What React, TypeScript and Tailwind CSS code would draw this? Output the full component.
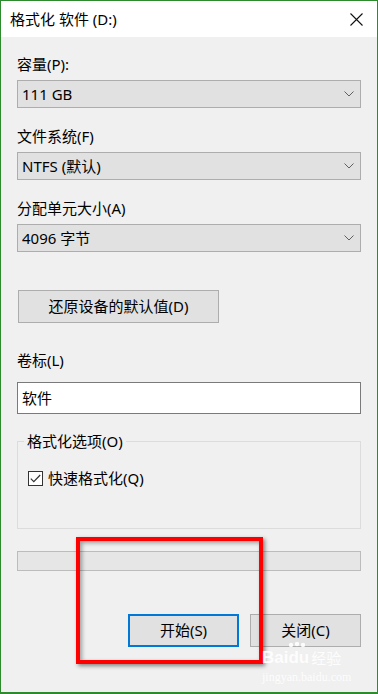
import React from "react";

const font = "font-['Noto_Sans','Noto_Sans_CJK_SC',sans-serif]";

function Chevron() {
  return (
    <svg width="10" height="6" viewBox="0 0 10 6" className="shrink-0">
      <path d="M0.5 0.5 L5 5 L9.5 0.5" fill="none" stroke="#606060" strokeWidth="1" />
    </svg>
  );
}

function Select({ value }: { value: string }) {
  return (
    <div className="flex h-[28px] items-center justify-between border border-[#adadad] bg-[#e1e1e1] pl-[4px] pr-[6px] text-[15px] leading-none text-black">
      <span>{value}</span>
      <Chevron />
    </div>
  );
}

function Label({ children, className = "" }: { children: React.ReactNode; className?: string }) {
  return <div className={`h-[20px] text-[15px] leading-[20px] text-black ${className}`}>{children}</div>;
}

function Watermark() {
  return (
    <div className="pointer-events-none absolute left-[261px] top-[649px] flex flex-col text-white opacity-90">
      <div className="flex items-end">
        <span className="font-['Liberation_Sans',sans-serif] text-[17px] font-bold leading-[16px]">Bai</span>
        <span className="relative font-['Liberation_Sans',sans-serif] text-[17px] font-bold leading-[16px]">
          <svg width="20" height="9" viewBox="0 0 20 9" className="absolute -top-[8px] left-[-1px]">
            <circle cx="4" cy="3" r="2.2" fill="white" />
            <circle cx="10" cy="2" r="2.2" fill="white" />
            <circle cx="16" cy="3" r="2.2" fill="white" />
          </svg>
          du
        </span>
        <span className="ml-[2px] font-['Noto_Sans_CJK_SC',sans-serif] text-[15px] leading-[16px]">经验</span>
      </div>
      <span className="mt-[5px] font-['Liberation_Serif',serif] text-[12px] leading-[12px]">jingyan.baidu.com</span>
    </div>
  );
}

export default function App() {
  return (
    <div className={`relative flex h-[694px] w-[378px] flex-col border border-b-2 border-[#2d8a2d] bg-[#f0f0f0] ${font}`}>
      <div className="flex h-[36px] items-center justify-between bg-white pl-[9px] pr-[14px]">
        <span className="text-[15px] leading-none text-black">格式化 软件 (D:)</span>
        <svg width="13" height="13" viewBox="0 0 13 13">
          <path d="M0.5 0.5 L12.5 12.5 M12.5 0.5 L0.5 12.5" stroke="#111" strokeWidth="1.1" />
        </svg>
      </div>

      <div className="flex flex-col px-[16px]">
        <Label className="mt-[17px]">容量(P):</Label>
        <div className="mt-[6px]">
          <Select value="111 GB" />
        </div>

        <Label className="mt-[18px]">文件系统(F)</Label>
        <div className="mt-[6px]">
          <Select value="NTFS (默认)" />
        </div>

        <Label className="mt-[18px]">分配单元大小(A)</Label>
        <div className="mt-[6px]">
          <Select value="4096 字节" />
        </div>

        <div className="ml-[1px] mt-[38px] flex h-[33px] w-[201px] items-center justify-center border border-[#adadad] bg-[#e1e1e1] text-[15px] leading-none text-black">
          还原设备的默认值(D)
        </div>

        <Label className="mt-[27px]">卷标(L)</Label>
        <div className="mt-[12px] flex h-[32px] items-center border border-[#7a7a7a] bg-white pl-[4px] text-[15px] leading-none text-black">
          软件
        </div>

        <div className="relative mt-[27px] h-[88px] border border-[#dcdcdc]">
          <span className="absolute -top-[11px] left-[6px] bg-[#f0f0f0] px-[3px] text-[15px] leading-[20px] text-black">
            格式化选项(O)
          </span>
          <div className="ml-[10px] mt-[26px] flex items-center gap-[5px]">
            <div className="flex h-[15px] w-[15px] items-center justify-center border border-[#333] bg-white">
              <svg width="11" height="9" viewBox="0 0 11 9">
                <path d="M0.8 4.6 L3.8 7.6 L10.2 1" fill="none" stroke="#333" strokeWidth="1.2" />
              </svg>
            </div>
            <span className="text-[15px] leading-[20px] text-black">快速格式化(Q)</span>
          </div>
        </div>

        <div className="mt-[22px] h-[20px] border border-[#bcbcbc] bg-[#e6e6e6]" />

        <div className="mt-[43px] flex justify-end gap-[11px]">
          <div className="flex h-[33px] w-[111px] items-center justify-center border-2 border-[#0078d7] bg-[#e1e1e1] text-[15px] leading-none text-black">
            开始(S)
          </div>
          <div className="flex h-[33px] w-[111px] items-center justify-center border border-[#adadad] bg-[#e1e1e1] text-[15px] leading-none text-black">
            关闭(C)
          </div>
        </div>
      </div>

      <div className="pointer-events-none absolute left-[75px] top-[536px] h-[127px] w-[187px] border-4 border-[#ff0000] shadow-[2px_2px_4px_rgba(0,0,0,0.45),inset_2px_2px_4px_rgba(0,0,0,0.35)]" />

      <Watermark />
    </div>
  );
}
